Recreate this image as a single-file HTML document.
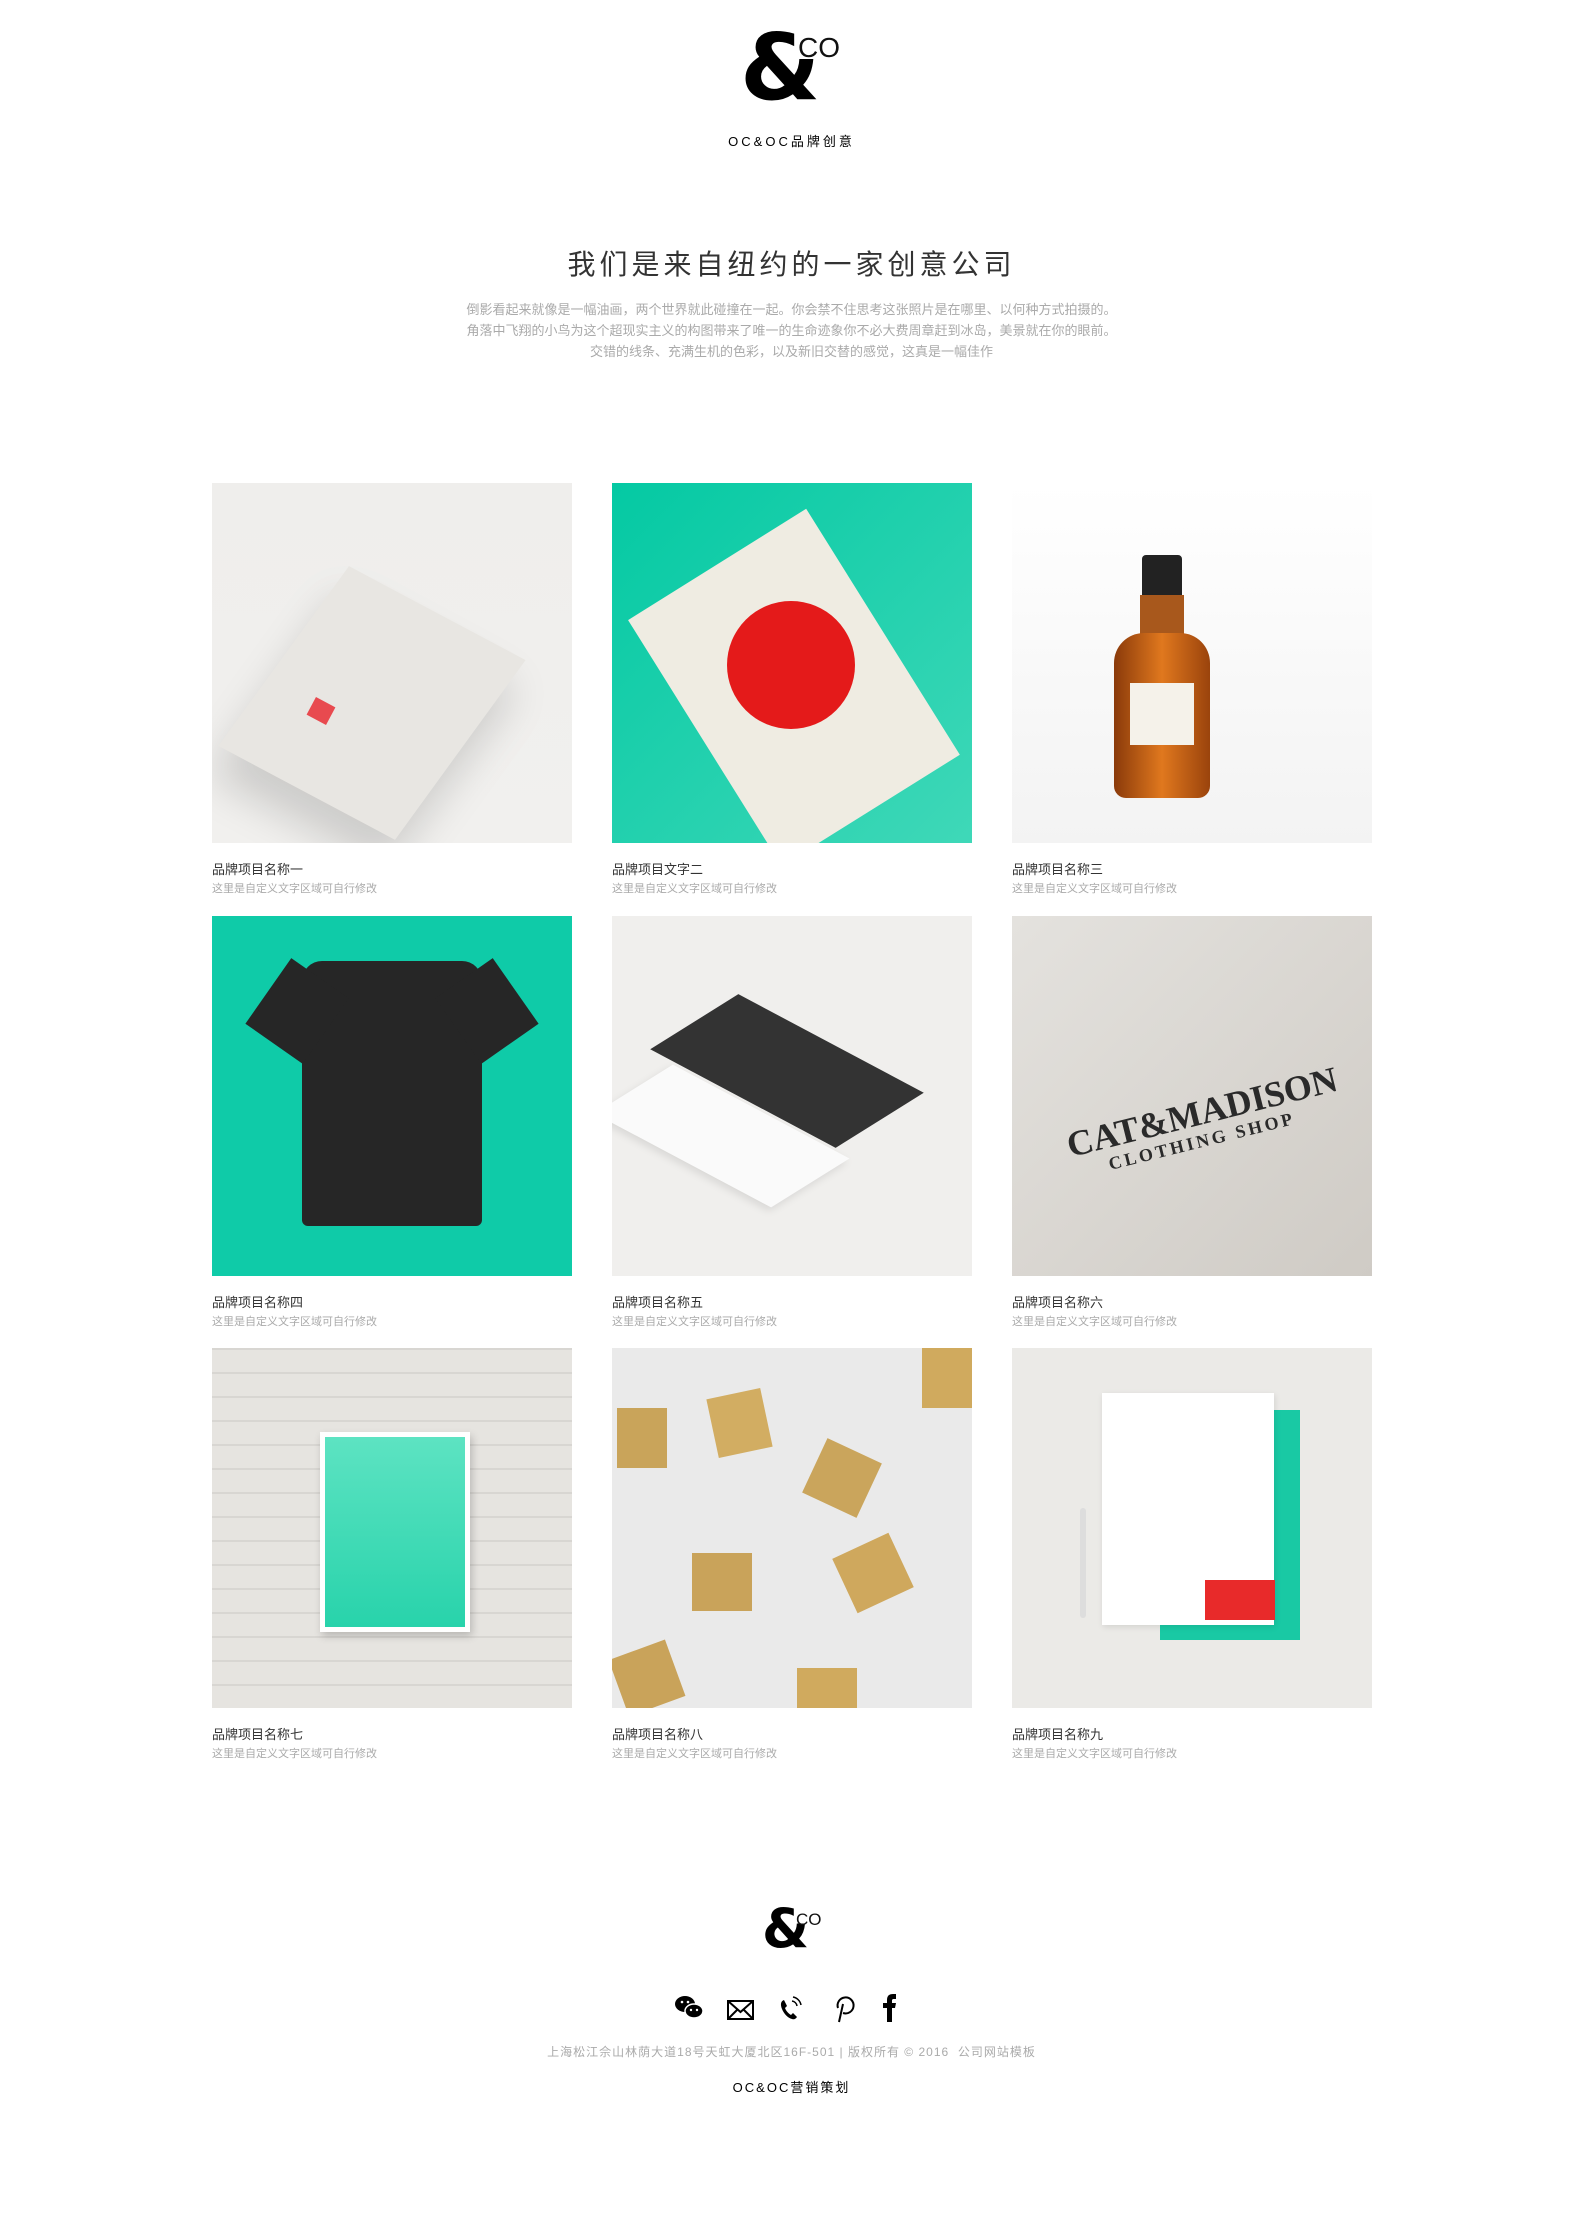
<!DOCTYPE html>
<html><head><meta charset="utf-8"><style>
*{margin:0;padding:0;box-sizing:border-box}
body{width:1583px;height:2214px;background:#fff;font-family:"Liberation Sans","Noto Sans CJK SC",sans-serif;position:relative;overflow:hidden}
.a{position:absolute}
.logo-amp{font-family:"DejaVu Sans","Liberation Sans",sans-serif;font-weight:bold;color:#000;line-height:1}
.card{position:absolute;width:360px;height:360px;overflow:hidden}
.t{position:absolute;font-size:13px;color:#333}
.s{position:absolute;font-size:11px;color:#aaa}
</style></head><body>
<div class="a logo-amp" style="left:740px;top:22px;font-size:92px;letter-spacing:-4px">&amp;</div>
<div class="a" style="left:798px;top:32px;font-size:28px;color:#111">CO</div>
<div class="a" style="left:0;width:1583px;top:131px;text-align:center;font-size:13px;letter-spacing:3px;color:#000">OC&amp;OC品牌创意</div>
<div class="a" style="left:0;width:1583px;top:243px;text-align:center;font-size:28px;letter-spacing:4px;color:#333">我们是来自纽约的一家创意公司</div>
<div class="a" style="left:420px;width:743px;top:299px;text-align:center;font-size:13px;line-height:21px;color:#aaa">倒影看起来就像是一幅油画，两个世界就此碰撞在一起。你会禁不住思考这张照片是在哪里、以何种方式拍摄的。<br>角落中飞翔的小鸟为这个超现实主义的构图带来了唯一的生命迹象你不必大费周章赶到冰岛，美景就在你的眼前。<br>交错的线条、充满生机的色彩，以及新旧交替的感觉，这真是一幅佳作</div>

<!-- row 1 -->
<div class="card" style="left:212px;top:483px;background:linear-gradient(#efeeec,#f1f0ee)">
<div class="a" style="left:60px;top:110px;width:200px;height:220px;background:#e8e6e2;transform:rotate(28deg) skewX(-8deg);box-shadow:10px 30px 40px rgba(0,0,0,.15)"></div>
<div class="a" style="left:98px;top:218px;width:22px;height:20px;background:#e84a4f;transform:rotate(28deg)"></div>
</div>
<div class="card" style="left:612px;top:483px;background:linear-gradient(135deg,#04c9a3,#3fd8b8)">
<div class="a" style="left:60px;top:70px;width:210px;height:290px;background:#efece2;transform:rotate(-32deg) translate(20px,0)"></div>
<div class="a" style="left:115px;top:118px;width:128px;height:128px;border-radius:50%;background:#e41a1a"></div>
</div>
<div class="card" style="left:1012px;top:483px;background:linear-gradient(#fff,#f3f3f3)">
<div class="a" style="left:130px;top:72px;width:40px;height:48px;background:#222;border-radius:4px 4px 0 0"></div>
<div class="a" style="left:128px;top:112px;width:44px;height:50px;background:#a8581c"></div>
<div class="a" style="left:102px;top:150px;width:96px;height:165px;background:linear-gradient(90deg,#8a3a0a,#e0781e,#9a430c);border-radius:30px 30px 12px 12px"></div>
<div class="a" style="left:118px;top:200px;width:64px;height:62px;background:#f5f2ea"></div>
</div>
<div class="t" style="left:212px;top:859px">品牌项目名称一</div><div class="s" style="left:212px;top:880px">这里是自定义文字区域可自行修改</div>
<div class="t" style="left:612px;top:859px">品牌项目文字二</div><div class="s" style="left:612px;top:880px">这里是自定义文字区域可自行修改</div>
<div class="t" style="left:1012px;top:859px">品牌项目名称三</div><div class="s" style="left:1012px;top:880px">这里是自定义文字区域可自行修改</div>

<!-- row 2 -->
<div class="card" style="left:212px;top:916px;background:#0fcba8">
<div class="a" style="left:90px;top:45px;width:180px;height:265px;background:#262626;border-radius:20px 20px 6px 6px"></div>
<div class="a" style="left:50px;top:55px;width:70px;height:80px;background:#262626;transform:rotate(35deg)"></div>
<div class="a" style="left:240px;top:55px;width:70px;height:80px;background:#262626;transform:rotate(-35deg)"></div>
</div>
<div class="card" style="left:612px;top:916px;background:#f0efed">
<div class="a" style="left:70px;top:110px;width:210px;height:90px;background:#333;transform:rotate(28deg) skewX(-30deg)"></div>
<div class="a" style="left:10px;top:180px;width:200px;height:80px;background:#fafafa;transform:rotate(28deg) skewX(-30deg);box-shadow:2px 4px 8px rgba(0,0,0,.1)"></div>
</div>
<div class="card" style="left:1012px;top:916px;background:linear-gradient(135deg,#e4e2de,#cfcbc5)">
<div class="a" style="left:40px;top:175px;width:300px;text-align:center;font:bold 36px 'Liberation Serif',serif;color:#2a2a2a;transform:rotate(-14deg)">CAT&amp;MADISON</div>
<div class="a" style="left:70px;top:215px;width:240px;text-align:center;font:bold 18px 'Liberation Serif',serif;letter-spacing:3px;color:#2a2a2a;transform:rotate(-14deg)">CLOTHING SHOP</div>
</div>
<div class="t" style="left:212px;top:1292px">品牌项目名称四</div><div class="s" style="left:212px;top:1313px">这里是自定义文字区域可自行修改</div>
<div class="t" style="left:612px;top:1292px">品牌项目名称五</div><div class="s" style="left:612px;top:1313px">这里是自定义文字区域可自行修改</div>
<div class="t" style="left:1012px;top:1292px">品牌项目名称六</div><div class="s" style="left:1012px;top:1313px">这里是自定义文字区域可自行修改</div>

<!-- row 3 -->
<div class="card" style="left:212px;top:1348px;background:repeating-linear-gradient(0deg,#e6e4e0 0 22px,#d8d6d2 22px 24px)">
<div class="a" style="left:108px;top:84px;width:150px;height:200px;background:#fff;padding:5px;box-shadow:2px 4px 8px rgba(0,0,0,.2)"><div style="width:100%;height:100%;background:linear-gradient(#5de3c2,#28d3ab)"></div></div>
</div>
<div class="card" style="left:612px;top:1348px;background:#eaeaea">
<div class="a" style="left:5px;top:60px;width:50px;height:60px;background:#c9a45a"></div>
<div class="a" style="left:100px;top:45px;width:55px;height:60px;background:#d2ad62;transform:rotate(-12deg)"></div>
<div class="a" style="left:200px;top:100px;width:60px;height:60px;background:#caa55c;transform:rotate(25deg)"></div>
<div class="a" style="left:310px;top:0;width:50px;height:60px;background:#d0aa5e"></div>
<div class="a" style="left:80px;top:205px;width:60px;height:58px;background:#c9a35a"></div>
<div class="a" style="left:230px;top:195px;width:62px;height:60px;background:#cfa85d;transform:rotate(-25deg)"></div>
<div class="a" style="left:5px;top:300px;width:60px;height:60px;background:#c9a35a;transform:rotate(-20deg)"></div>
<div class="a" style="left:185px;top:320px;width:60px;height:50px;background:#d0aa5e"></div>
</div>
<div class="card" style="left:1012px;top:1348px;background:#ebeae7">
<div class="a" style="left:148px;top:62px;width:140px;height:230px;background:#19c9a4"></div>
<div class="a" style="left:90px;top:45px;width:172px;height:232px;background:#fff;box-shadow:1px 2px 6px rgba(0,0,0,.1)"></div>
<div class="a" style="left:193px;top:232px;width:70px;height:40px;background:#e82a2a"></div>
<div class="a" style="left:68px;top:160px;width:6px;height:110px;background:#ddd;border-radius:3px"></div>
</div>
<div class="t" style="left:212px;top:1724px">品牌项目名称七</div><div class="s" style="left:212px;top:1745px">这里是自定义文字区域可自行修改</div>
<div class="t" style="left:612px;top:1724px">品牌项目名称八</div><div class="s" style="left:612px;top:1745px">这里是自定义文字区域可自行修改</div>
<div class="t" style="left:1012px;top:1724px">品牌项目名称九</div><div class="s" style="left:1012px;top:1745px">这里是自定义文字区域可自行修改</div>

<!-- footer -->
<div class="a logo-amp" style="left:762px;top:1902px;font-size:54px;letter-spacing:-2px">&amp;</div>
<div class="a" style="left:796px;top:1910px;font-size:17px;color:#111">CO</div>
<svg class="a" style="left:672px;top:1990px" width="240" height="36" viewBox="0 0 240 36">
<g fill="#000"><ellipse cx="13" cy="14" rx="10" ry="8"/><ellipse cx="22" cy="21" rx="9" ry="7" stroke="#fff" stroke-width="1.5"/><circle cx="10" cy="12" r="1.3" fill="#fff"/><circle cx="16" cy="12" r="1.3" fill="#fff"/><circle cx="19" cy="20" r="1.2" fill="#fff"/><circle cx="25" cy="20" r="1.2" fill="#fff"/></g>
<g fill="none" stroke="#000" stroke-width="2"><rect x="56" y="11" width="25" height="18"/><path d="M56 11l12.5 11L81 11M56 29l9-9M81 29l-9-9"/></g>
<path d="M112 10c-3 1-4 4-2 9s6 9 10 10c3 1 4-1 5-2l-4-4-2 2c-2-1-5-4-6-7l2-2-3-6z" fill="#000"/>
<path d="M120 11a6 6 0 0 1 5 5M121 7a10 10 0 0 1 8 8" fill="none" stroke="#000" stroke-width="1.5"/>
<path d="M167 32l4-18M166 18a8 8 0 1 1 5 5" fill="none" stroke="#000" stroke-width="2"/>
<path d="M215 32V18h-4v-5h4v-3c0-4 2-6 6-6h3v5h-2c-2 0-2 1-2 2v2h4l-1 5h-3v14z" fill="#000"/>
</svg>
<div class="a" style="left:0;width:1583px;top:2043px;text-align:center;font-size:12px;letter-spacing:1px;color:#aaa">上海松江佘山林荫大道18号天虹大厦北区16F-501 | 版权所有 © 2016&nbsp; 公司网站模板</div>
<div class="a" style="left:0;width:1583px;top:2077px;text-align:center;font-size:13px;letter-spacing:2px;color:#000">OC&amp;OC营销策划</div>
</body></html>
